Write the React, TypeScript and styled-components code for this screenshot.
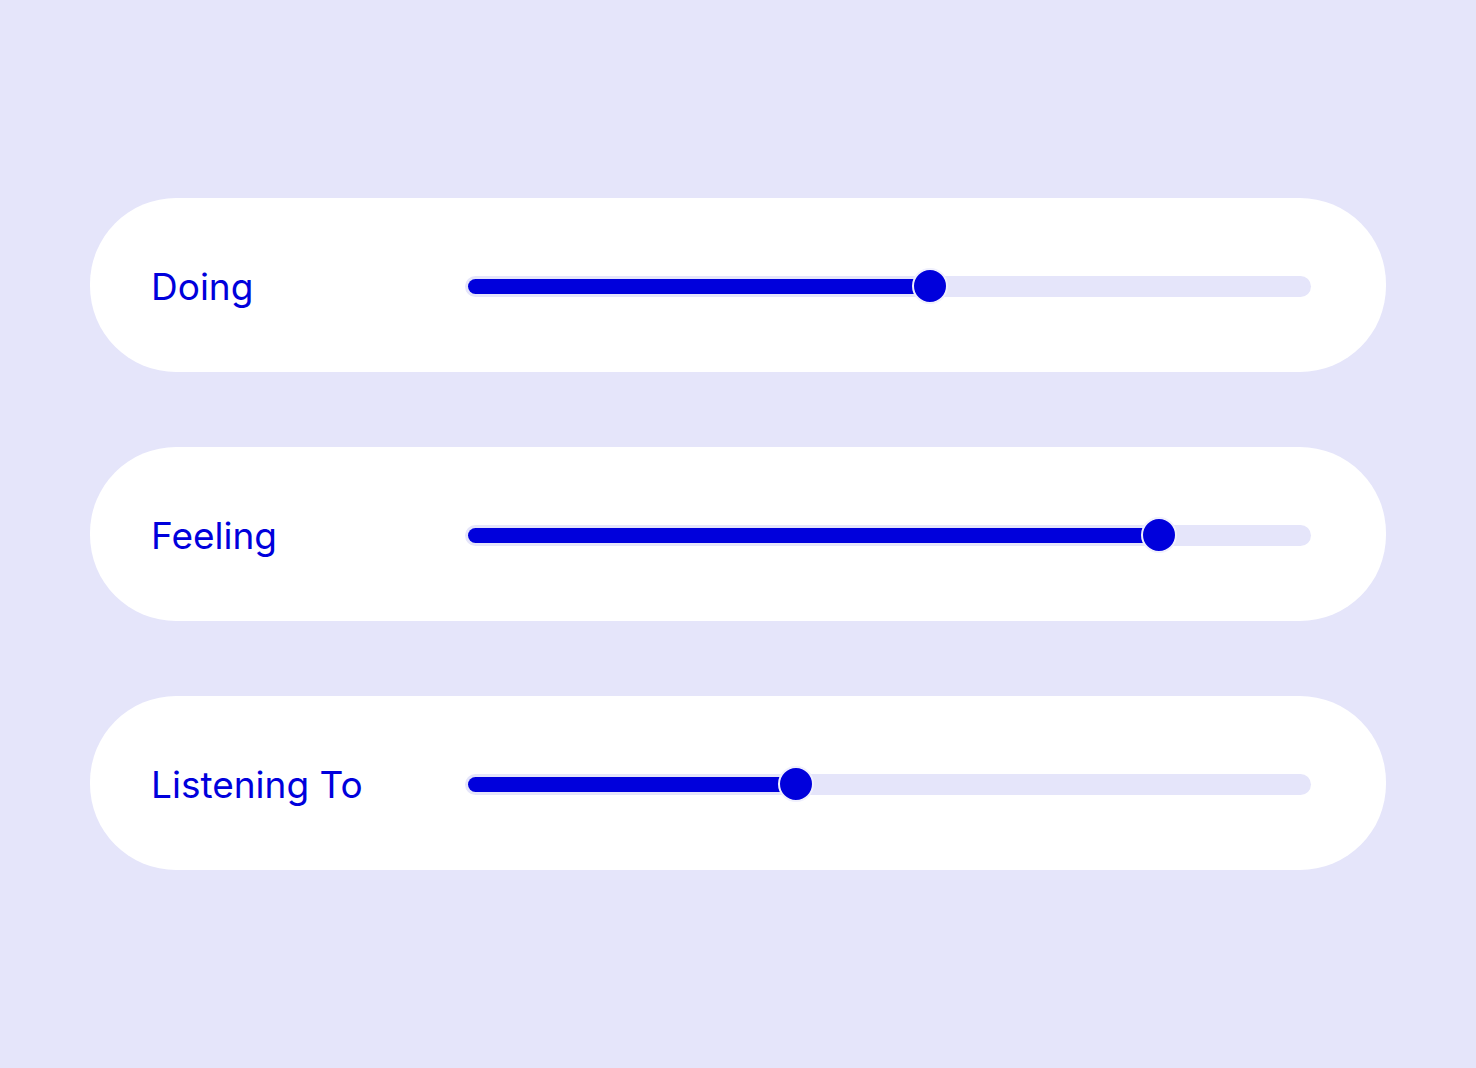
import styled, { createGlobalStyle } from 'styled-components';

const GlobalStyle = createGlobalStyle`
  html, body {
    margin: 0;
    padding: 0;
    background: #e5e5fa;
  }
  body {
    font-family: Inter, "Noto Sans", sans-serif;
  }
`;

const rows = [
  { label: 'Doing', value: 55 },
  { label: 'Feeling', value: 82 },
  { label: 'Listening To', value: 39.1 },
];

const Page = styled.main`
  min-height: 1068px;
  display: flex;
  flex-direction: column;
  justify-content: center;
  align-items: center;
  gap: 75px;
  box-sizing: border-box;
`;

const Card = styled.section`
  width: 1296px;
  height: 174px;
  box-sizing: border-box;
  background: #ffffff;
  border-radius: 86px;
  display: flex;
  align-items: center;
  padding: 2px 75px 0 61px;
`;

const Label = styled.span`
  width: 314px;
  flex-shrink: 0;
  color: #0000dc;
  font-size: 37px;
  font-weight: 400;
  line-height: 1;
`;

const Track = styled.div`
  position: relative;
  flex: 1;
  height: 21px;
  border-radius: 11px;
  background: #e5e5fa;
`;

const Fill = styled.div`
  position: absolute;
  left: 3px;
  top: 3px;
  bottom: 3px;
  border-radius: 8px;
  background: #0000dc;
`;

const Thumb = styled.div`
  position: absolute;
  top: 50%;
  width: 32px;
  height: 32px;
  border-radius: 50%;
  background: #0000dc;
  border: 2px solid #f0f0fd;
  transform: translate(-50%, -50%);
`;

const SliderRow = ({ label, value }: { label: string; value: number }) => (
  <Card>
    <Label>{label}</Label>
    <Track>
      <Fill style={{ width: `calc(${value}% - 3px)` }} />
      <Thumb style={{ left: `${value}%` }} />
    </Track>
  </Card>
);

export default function App() {
  return (
    <>
      <GlobalStyle />
      <Page>
        {rows.map((r) => (
          <SliderRow key={r.label} label={r.label} value={r.value} />
        ))}
      </Page>
    </>
  );
}
